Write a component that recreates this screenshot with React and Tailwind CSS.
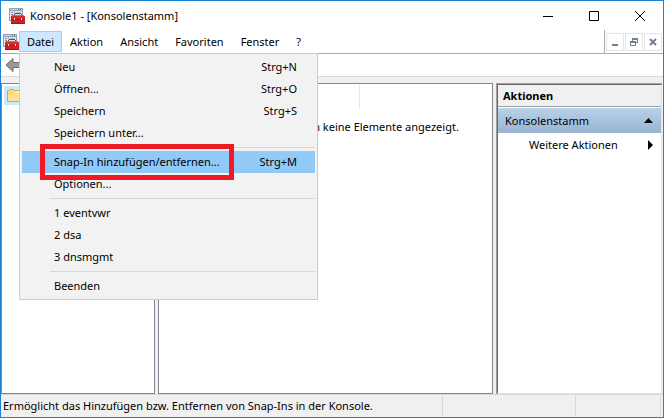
import clsx from "clsx";

const menuItems = [
  { label: "Neu", keys: "Strg+N" },
  { label: "Öffnen...", keys: "Strg+O" },
  { label: "Speichern", keys: "Strg+S" },
  { label: "Speichern unter..." },
  null,
  { label: "Snap-In hinzufügen/entfernen...", keys: "Strg+M", active: true },
  { label: "Optionen..." },
  null,
  { label: "1 eventvwr" },
  { label: "2 dsa" },
  { label: "3 dnsmgmt" },
  null,
  { label: "Beenden" },
];

function ConsoleIcon() {
  return (
    <svg width="16" height="16" viewBox="0 0 16 16" shapeRendering="crispEdges" className="shrink-0" aria-hidden="true">
      <rect x="0" y="0" width="14" height="13" fill="#93a2b2" />
      <rect x="1" y="1" width="12" height="1" fill="#c9d5e1" />
      <rect x="9" y="1" width="1" height="1" fill="#5f7183" />
      <rect x="11" y="1" width="1" height="1" fill="#5f7183" />
      <rect x="1" y="3" width="12" height="9" fill="#dfe5eb" />
      <rect x="5" y="3" width="1" height="9" fill="#a9b6c3" />
      <rect x="2" y="4" width="2" height="1" fill="#8494a5" />
      <rect x="2" y="6" width="2" height="1" fill="#8494a5" />
      <rect x="2" y="8" width="1" height="1" fill="#8494a5" />
      <rect x="7" y="4" width="5" height="1" fill="#b4c0cc" />
      <rect x="6" y="5" width="6" height="1" fill="#7b4444" />
      <rect x="5" y="6" width="1" height="1" fill="#7b4444" />
      <rect x="12" y="6" width="1" height="1" fill="#7b4444" />
      <rect x="3" y="7" width="12" height="1" fill="#e0605a" />
      <rect x="2" y="8" width="14" height="3" fill="#d42c2a" />
      <rect x="2" y="11" width="14" height="1" fill="#a31a19" />
      <rect x="2" y="12" width="14" height="3" fill="#c72322" />
      <rect x="5" y="10" width="1" height="2" fill="#f2dddd" />
      <rect x="12" y="10" width="1" height="2" fill="#f2dddd" />
      <rect x="2" y="15" width="14" height="1" fill="#9a1817" />
    </svg>
  );
}

function TitleBar() {
  return (
    <header className="flex h-[29px] items-center pl-2">
      <ConsoleIcon />
      <h1 className="ml-[5px] flex-1">Konsole1 - [Konsolenstamm]</h1>
      <button aria-label="Minimieren" className="flex h-full w-[46px] items-center justify-center">
        <svg width="10" height="10" stroke="#000" fill="none"><path d="M0 5.5h10" /></svg>
      </button>
      <button aria-label="Maximieren" className="flex h-full w-[46px] items-center justify-center">
        <svg width="10" height="10" stroke="#000" fill="none"><path d="M.5.5h9v9h-9z" /></svg>
      </button>
      <button aria-label="Schließen" className="flex h-full w-[46px] items-center justify-center">
        <svg width="10" height="10" stroke="#000" fill="none"><path d="M0 0l10 10M10 0L0 10" /></svg>
      </button>
    </header>
  );
}

function FileMenu() {
  return (
    <div className="absolute top-[22px] left-0 z-10 w-[299px] border border-[#cccccc] bg-[#f2f2f2] p-0.5">
      {menuItems.map((item, i) =>
        item ? (
          <button
            key={i}
            className={clsx("flex h-[22px] w-full items-center justify-between pr-[18px] pl-8", item.active && "bg-[#91c9f7]")}
          >
            <span>{item.label}</span>
            <span>{item.keys}</span>
          </button>
        ) : (
          <hr key={i} className="my-[3px] ml-7 border-[#d7d7d7]" />
        )
      )}
      {/* Highlight frame */}
      <div className="pointer-events-none absolute top-[90px] left-5 h-9 w-[194px] border-[5px] border-[#ed1c24]" />
    </div>
  );
}

function MenuBar() {
  return (
    <nav className="flex h-6 items-stretch border-b border-[#a5acb2] pl-0.5">
      <div className="flex items-center">
        <ConsoleIcon />
      </div>
      <div className="relative mt-px">
        <button className="h-[21px] w-[43px] border border-[#99d1ff] bg-[#cce8ff] pt-px">Datei</button>
        <FileMenu />
      </div>
      <div className="flex gap-px">
        <button className="px-2">Aktion</button>
        <button className="px-2">Ansicht</button>
        <button className="px-2">Favoriten</button>
        <button className="px-2">Fenster</button>
        <button className="px-2">?</button>
      </div>
      <div className="ml-auto flex items-center gap-px border-l border-[#a5acb2] px-px">
        <button aria-label="Fenster minimieren" className="flex h-[18px] w-[18px] items-center justify-center border border-[#e5e5e5]">
          <svg width="10" height="10" fill="#72808f"><path d="M2 7h6v2H2z" /></svg>
        </button>
        <button aria-label="Fenster wiederherstellen" className="flex h-[18px] w-[18px] items-center justify-center border border-[#e5e5e5]">
          <svg width="10" height="10" fill="#72808f" fillRule="evenodd">
            <path d="M3 1h6v5H7V5h1V3H4v1H3zM1 4h6v5H1zM2 6v2h4V6z" />
          </svg>
        </button>
        <button aria-label="Fenster schließen" className="flex h-[18px] w-[18px] items-center justify-center border border-[#e5e5e5]">
          <svg width="10" height="10" stroke="#72808f" strokeWidth="2"><path d="M2 2l6 6M8 2L2 8" /></svg>
        </button>
      </div>
    </nav>
  );
}

function Toolbar() {
  return (
    <div className="flex h-[23px] items-center border-b border-[#dadada] pl-1">
      <button aria-label="Zurück">
        <svg width="18" height="16" viewBox="0 0 18 16">
          <path d="M1 8l7-6.500v4h9v5H8v4z" fill="#9a9a9a" stroke="#6e6e6e" />
        </svg>
      </button>
    </div>
  );
}

function TreePane() {
  return (
    <div className="w-[154px] border border-[#828790] bg-white p-0.5">
      <div className="flex h-[19px] w-[90px] items-center bg-[#cce8ff] pl-[3px]">
        <svg width="17" height="15" viewBox="0 0 17 15" aria-hidden="true">
          <path d="M.5 13.500v-11h1l1-1h4l1 1h7l1 1v10z" fill="#f7d978" stroke="#d9ab45" />
          <path d="M8 3.500h5v1H8z" fill="#fff" />
          <path d="M1 6.500h6l1-1h7v7.500H1z" fill="#fde29a" />
        </svg>
      </div>
    </div>
  );
}

function ListPane() {
  return (
    <div className="min-w-0 flex-1 border border-[#828790] bg-white">
      <div className="flex h-[25px] py-px">
        <div className="w-[201px] border-r border-[#e5e5e5]" />
      </div>
      <p className="mt-[10px] text-center whitespace-nowrap">In dieser Ansicht werden keine Elemente angezeigt.</p>
    </div>
  );
}

function ActionsPane() {
  return (
    <aside className="flex w-[166px] border-t border-l border-[#a0a0a0]">
      <div className="flex-1 border border-t-[#696969] border-r-[#e3e3e3] border-b-[#e3e3e3] border-l-[#696969] bg-white">
        <h2 className="flex h-[22px] items-center border-b border-[#a0a0a0] bg-[#f0f0f0] pl-[5px] font-bold">Aktionen</h2>
        <button className="mt-px flex h-[25px] w-full items-center justify-between bg-linear-to-b from-[#b9d1ea] to-[#99b4d1] pr-2 pl-[7px]">
          Konsolenstamm
          <svg width="9" height="5"><path d="M4.500 0L9 5H0z" /></svg>
        </button>
        <button className="flex h-6 w-full items-center justify-between pr-2 pl-[31px]">
          Weitere Aktionen
          <svg width="5" height="10"><path d="M0 0l5 5-5 5z" /></svg>
        </button>
      </div>
    </aside>
  );
}

function StatusBar() {
  return (
    <footer className="flex h-[23px] items-center border-t border-[#d7d7d7] bg-[#f0f0f0] py-px pr-0.5 pl-0.5">
      <span className="flex-1">Ermöglicht das Hinzufügen bzw. Entfernen von Snap-Ins in der Konsole.</span>
      <div className="h-full w-[133px] border-l border-[#d7d7d7]" />
      <div className="h-full w-[86px] border-x border-[#d7d7d7]" />
    </footer>
  );
}

export default function App() {
  return (
    <div className="flex min-h-screen flex-col border border-[#1883d7] bg-white font-['Noto_Sans',sans-serif] text-[11px] leading-4 text-black">
      <TitleBar />
      <MenuBar />
      <Toolbar />
      <main className="flex flex-1 gap-[3px] bg-[#f0f0f0] pt-1.5 pr-px">
        <TreePane />
        <ListPane />
        <ActionsPane />
      </main>
      <StatusBar />
    </div>
  );
}
